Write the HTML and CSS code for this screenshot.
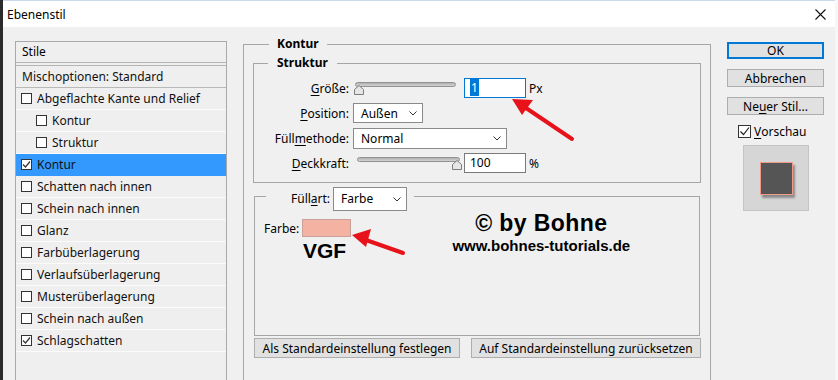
FILE: index.html
```html
<!DOCTYPE html>
<html lang="de">
<head>
  <meta charset="UTF-8">
  <title>Ebenenstil</title>
  <link rel="stylesheet" href="styles.css">
</head>
<body>
  <div class="dialog">
    <div class="titlebar">
      <span class="title">Ebenenstil</span>
      <svg class="close" width="11" height="11" viewBox="0 0 11 11"><path d="M0.5 0.5L10.5 10.5M10.5 0.5L0.5 10.5" stroke="#111" stroke-width="1.1"/></svg>
    </div>
    <div class="content">
      <div class="stile">
        <div class="stile-head">Stile</div>
        <div class="stile-row misch">Mischoptionen: Standard</div>
        <div class="stile-row"><span class="cb"></span>Abgeflachte Kante und Relief</div>
        <div class="stile-row sub"><span class="cb"></span>Kontur</div>
        <div class="stile-row sub"><span class="cb"></span>Struktur</div>
        <div class="stile-row active"><span class="cb"><svg width="9" height="9" viewBox="0 0 9 9"><path d="M1 4.5L3.5 7L8 1.5" fill="none" stroke="#333" stroke-width="1.2"/></svg></span>Kontur</div>
        <div class="stile-row"><span class="cb"></span>Schatten nach innen</div>
        <div class="stile-row"><span class="cb"></span>Schein nach innen</div>
        <div class="stile-row"><span class="cb"></span>Glanz</div>
        <div class="stile-row"><span class="cb"></span>Farbüberlagerung</div>
        <div class="stile-row"><span class="cb"></span>Verlaufsüberlagerung</div>
        <div class="stile-row"><span class="cb"></span>Musterüberlagerung</div>
        <div class="stile-row"><span class="cb"></span>Schein nach außen</div>
        <div class="stile-row"><span class="cb"><svg width="9" height="9" viewBox="0 0 9 9"><path d="M1 4.5L3.5 7L8 1.5" fill="none" stroke="#333" stroke-width="1.2"/></svg></span>Schlagschatten</div>
      </div>

      <div class="main">
        <fieldset class="group outer">
          <legend>Kontur</legend>
          <fieldset class="group struktur">
            <legend>Struktur</legend>
            <div class="rows">
              <div class="row">
                <span class="lbl"><u>G</u>röße:</span>
                <div class="slider size">
                  <div class="track"></div>
                  <svg class="thumb" width="10" height="10" viewBox="0 0 10 10"><path d="M0.5 9.5V4.5L5 0.5L9.5 4.5V9.5Z" fill="#e6e6e6" stroke="#7d7d7d"/></svg>
                </div>
                <span class="field focus"><span class="sel">1</span></span>
                <span class="unit">Px</span>
              </div>
              <div class="row">
                <span class="lbl"><u>P</u>osition:</span>
                <span class="select pos">Außen<svg class="chev" width="8" height="5" viewBox="0 0 8 5"><path d="M0.5 0.5L4 4L7.5 0.5" fill="none" stroke="#333"/></svg></span>
              </div>
              <div class="row">
                <span class="lbl">Füll<u>m</u>ethode:</span>
                <span class="select mode">Normal<svg class="chev" width="8" height="5" viewBox="0 0 8 5"><path d="M0.5 0.5L4 4L7.5 0.5" fill="none" stroke="#333"/></svg></span>
              </div>
              <div class="row">
                <span class="lbl"><u>D</u>eckkraft:</span>
                <div class="slider opacity">
                  <div class="track"></div>
                  <svg class="thumb" width="10" height="10" viewBox="0 0 10 10"><path d="M0.5 9.5V4.5L5 0.5L9.5 4.5V9.5Z" fill="#e6e6e6" stroke="#7d7d7d"/></svg>
                </div>
                <span class="field">100</span>
                <span class="unit">%</span>
              </div>
            </div>
          </fieldset>

          <fieldset class="group fill">
            <legend>
              <span class="lbl-fill">Füll<u>a</u>rt:</span>
              <span class="select art">Farbe<svg class="chev" width="8" height="5" viewBox="0 0 8 5"><path d="M0.5 0.5L4 4L7.5 0.5" fill="none" stroke="#333"/></svg></span>
            </legend>
            <div class="fill-body">
              <div class="farbe-col">
                <div class="farbe-row">Farbe: <span class="swatch"></span></div>
                <div class="vgf">VGF</div>
              </div>
              <div class="credit">
                <div class="credit-name">© by Bohne</div>
                <div class="credit-url">www.bohnes-tutorials.de</div>
              </div>
            </div>
          </fieldset>

          <div class="defaults">
            <span class="btn set">Als Standardeinstellung festlegen</span>
            <span class="btn reset">Auf Standardeinstellung zurücksetzen</span>
          </div>
        </fieldset>
      </div>

      <div class="side">
        <span class="btn ok">OK</span>
        <span class="btn">Abbrechen</span>
        <span class="btn">Ne<u>u</u>er Stil...</span>
        <div class="vorschau">
          <span class="cb big"><svg width="11" height="11" viewBox="0 0 11 11"><path d="M1.5 5.5L4.5 8.5L10 1.5" fill="none" stroke="#222" stroke-width="1.2"/></svg></span><u>V</u>orschau
        </div>
        <div class="preview"><div class="preview-square"></div></div>
      </div>
    </div>

    <svg class="arrows" width="838" height="380" viewBox="0 0 838 380">
      <path d="M572 139L526 108" stroke="#e8121a" stroke-width="4" stroke-linecap="round"/>
      <path d="M512 99L533 100L522 115Z" fill="#e8121a"/>
      <path d="M403 253L366 240" stroke="#e8121a" stroke-width="4" stroke-linecap="round"/>
      <path d="M352 235L371 229L366 247Z" fill="#e8121a"/>
    </svg>
  </div>
</body>
</html>
```

FILE: styles.css
```css
* { box-sizing: border-box; }
body {
  margin: 0;
  background: #f0f0f0;
  font-family: "Noto Sans", Arial, sans-serif;
  font-size: 12px;
  color: #000;
}
u { text-decoration: underline; text-underline-offset: 2px; }

.dialog {
  position: relative;
  width: 838px;
  height: 380px;
  overflow: hidden;
  border-left: 3px solid #2b2b2b;
  border-right: 3px solid #f7f7f7;
  background: #f0f0f0;
}

.titlebar {
  height: 27px;
  background: #fff;
  border-top: 1px solid #c9d9ea;
  display: flex;
  align-items: center;
  justify-content: space-between;
  padding: 0 9px 0 4px;
}
.title { font-size: 12px; }

.content {
  display: flex;
  align-items: flex-start;
  height: 353px;
}

/* Stile list */
.stile {
  width: 212px;
  height: 350px;
  margin: 14px 0 0 12px;
  border: 1px solid #a9a9a9;
  background: #efefef;
}
.stile-head {
  height: 24px;
  line-height: 20px;
  padding-left: 6px;
  border-bottom: 4px double #b4b4b4;
}
.stile-row {
  height: 22px;
  line-height: 21px;
  padding-left: 5px;
  border-bottom: 1px solid #fbfbfb;
  display: flex;
  align-items: center;
  color: #111;
}
.stile-row.misch { border-bottom-color: #b9b9b9; padding-left: 6px; }
.stile-row.sub { padding-left: 20px; }
.stile-row.active { background: #3399ff; border-bottom-color: #3399ff; }
.cb {
  width: 11px;
  height: 11px;
  margin-right: 5px;
  border: 1px solid #333;
  background: #fff;
  display: inline-flex;
  align-items: center;
  justify-content: center;
  flex-shrink: 0;
}

/* middle */
.main { margin-left: 16px; width: 468px; }
.group {
  margin: 0;
  padding: 0;
  border: 1px solid #a6a6a6;
  min-width: 0;
}
.group > legend {
  font-weight: bold;
  line-height: 16px;
  height: 16px;
  padding: 0 8px;
  margin-left: 16px;
}
.outer {
  margin-top: 9px;
  height: 360px;
  padding: 0 9px;
}
.struktur { margin-top: 3px; padding-bottom: 9px; }
.struktur > legend { margin-left: 14px; padding: 0 9px; }
.rows {
  display: flex;
  flex-direction: column;
  gap: 5px;
  padding-top: 7px;
}
.row {
  display: flex;
  align-items: center;
  height: 20px;
}
.lbl {
  width: 95px;
  margin-right: 4px;
  text-align: right;
}
.slider {
  position: relative;
  width: 109px;
  height: 20px;
}
.track {
  margin-top: 4px;
  height: 5px;
  border: 1px solid #929292;
  border-radius: 3px;
  background: linear-gradient(#b0b0b0, #d4d4d4);
}
.size .track { margin-left: 2px; width: 101px; }
.opacity .track { margin-left: 4px; width: 103px; }
.thumb { position: absolute; top: 7px; }
.size .thumb { left: 1px; }
.opacity .thumb { left: 99px; }
.field {
  width: 62px;
  height: 20px;
  margin-left: 2px;
  border: 1px solid #7a7a7a;
  background: #fff;
  line-height: 18px;
  padding-left: 5px;
}
.field.focus { border-color: #0078d7; }
.sel { background: #0078d7; color: #fff; padding: 0 1px; }
.unit { margin-left: 3px; }
.select {
  height: 20px;
  border: 1px solid #8a8a8a;
  background: #fff;
  display: flex;
  align-items: center;
  justify-content: space-between;
  padding: 0 5px 0 7px;
}
.select.pos { width: 70px; }
.select.mode { width: 154px; height: 21px; }
.select.art { width: 74px; height: 24px; margin-bottom: -6px; }

.fill {
  margin: 4px 1px 0 1px;
  height: 149px;
}
.fill > legend {
  font-weight: normal;
  height: auto;
  margin-left: 11px;
  padding: 0 7px 0 25px;
  display: flex;
  align-items: flex-start;
}
.lbl-fill {
  line-height: 24px;
  height: 24px;
  margin: 0 3px -6px 0;
}
.fill-body {
  display: flex;
  padding: 14px 0 0 9px;
}
.farbe-row {
  display: flex;
  align-items: center;
  height: 18px;
}
.swatch {
  width: 49px;
  height: 18px;
  margin-left: 3px;
  background: #f4b2a3;
  border: 1px solid #c9a198;
}
.vgf {
  font-family: "Liberation Sans", Arial, sans-serif;
  font-weight: bold;
  font-size: 21px;
  line-height: 24px;
  margin: 2px 0 0 39px;
}
.credit {
  margin-left: 100px;
  width: 180px;
  text-align: center;
  font-family: "Liberation Sans", Arial, sans-serif;
  font-weight: bold;
}
.credit-name { font-size: 23px; letter-spacing: 0.4px; line-height: 24px; margin-top: -8px; }
.credit-url { font-size: 15px; line-height: 18px; margin-top: 2px; }

.defaults {
  display: flex;
  gap: 11px;
  margin: 2px 0 0 1px;
}
.btn {
  height: 20px;
  border: 1px solid #adadad;
  background: #e1e1e1;
  display: flex;
  align-items: center;
  justify-content: center;
}
.btn.set { width: 206px; }
.btn.reset { width: 230px; }

/* right column */
.side {
  margin-left: 16px;
  width: 97px;
  display: flex;
  flex-direction: column;
  padding-top: 15px;
}
.side .btn { height: 18px; margin-bottom: 10px; }
.side .btn.ok { height: 17px; border: 2px solid #0078d7; margin-bottom: 10px; }
.vorschau {
  display: flex;
  align-items: center;
  height: 14px;
  margin-top: -1px;
  padding-left: 11px;
}
.cb.big {
  width: 13px;
  height: 13px;
  margin-right: 3px;
  border-color: #333;
}
.preview {
  width: 66px;
  height: 66px;
  margin: 7px 0 0 16px;
  background: #d6d6d6;
  border: 1px solid #c4c4c4;
  display: flex;
  align-items: center;
  justify-content: center;
}
.preview-square {
  width: 33px;
  height: 33px;
  background: #555;
  border: 1px solid #f29a88;
  box-shadow: 2px 3px 2px rgba(0, 0, 0, 0.35);
}

.arrows { position: absolute; left: -3px; top: 0; pointer-events: none; }
```
